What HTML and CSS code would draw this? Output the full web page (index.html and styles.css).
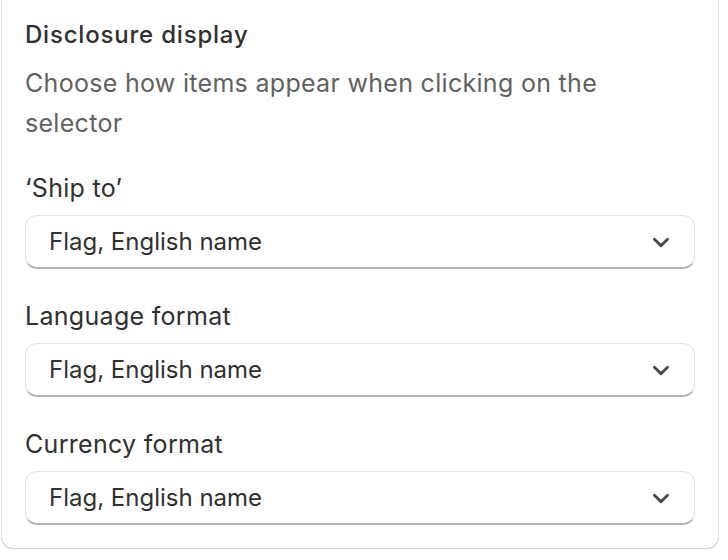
FILE: index.html
```html
<!DOCTYPE html>
<html lang="en">
<head>
<meta charset="utf-8">
<title>Disclosure display</title>
<link rel="stylesheet" href="styles.css">
</head>
<body>
<div class="card">
  <h2 class="title">Disclosure display</h2>
  <p class="desc">Choose how items appear when clicking on the selector</p>
  <div class="fields">
    <div class="field">
      <label class="label">‘Ship to’</label>
      <div class="select">
        <span class="value">Flag, English name</span>
        <svg class="chev" viewBox="0 0 20 20" width="22" height="22"><path d="M4 7.5l6 6 6-6" fill="none" stroke="#4a4a4a" stroke-width="2.6" stroke-linecap="round" stroke-linejoin="round"/></svg>
      </div>
    </div>
    <div class="field">
      <label class="label">Language format</label>
      <div class="select">
        <span class="value">Flag, English name</span>
        <svg class="chev" viewBox="0 0 20 20" width="22" height="22"><path d="M4 7.5l6 6 6-6" fill="none" stroke="#4a4a4a" stroke-width="2.6" stroke-linecap="round" stroke-linejoin="round"/></svg>
      </div>
    </div>
    <div class="field">
      <label class="label">Currency format</label>
      <div class="select">
        <span class="value">Flag, English name</span>
        <svg class="chev" viewBox="0 0 20 20" width="22" height="22"><path d="M4 7.5l6 6 6-6" fill="none" stroke="#4a4a4a" stroke-width="2.6" stroke-linecap="round" stroke-linejoin="round"/></svg>
      </div>
    </div>
  </div>
</div>
</body>
</html>
```
FILE: styles.css
```css
html, body {
  margin: 0;
  padding: 0;
  background: #ffffff;
}
body {
  font-family: Inter, "Noto Sans", "Liberation Sans", sans-serif;
  color: #303030;
}
.card {
  width: 718px;
  height: 549px;
  margin-left: 1px;
  box-sizing: border-box;
  padding: 19px 24px 25px 24px;
  background: #fff;
  border-radius: 0 0 13px 13px;
  box-shadow: inset 1px 0 0 #dcdcdc, inset -1px 0 0 #dcdcdc, inset 0 -1px 0 #d0d0d0, 0 1px 0 #e6e6e6;
  display: flex;
  flex-direction: column;
}
.title {
  margin: 0;
  font-size: 24px;
  line-height: 32px;
  font-weight: 550;
  letter-spacing: 0.8px;
  color: #303030;
}
.desc {
  margin: 12px 0 0 0;
  font-size: 25px;
  line-height: 40px;
  letter-spacing: 0.3px;
  color: #616161;
  width: 620px;
}
.fields {
  margin-top: 25px;
  display: flex;
  flex-direction: column;
  gap: 27px;
}
.field {
  display: flex;
  flex-direction: column;
  gap: 7px;
}
.label {
  font-size: 25px;
  line-height: 40px;
  letter-spacing: 0.3px;
  color: #303030;
}
.select {
  height: 54px;
  box-sizing: border-box;
  border: 1px solid #e3e3e3;
  border-bottom: 2px solid #b5b5b5;
  border-radius: 12px;
  display: flex;
  align-items: center;
  justify-content: space-between;
  padding: 0 22px 0 23px;
  background: #fff;
}
.value {
  font-size: 24px;
  color: #303030;
}
.chev {
  display: block;
}
```
